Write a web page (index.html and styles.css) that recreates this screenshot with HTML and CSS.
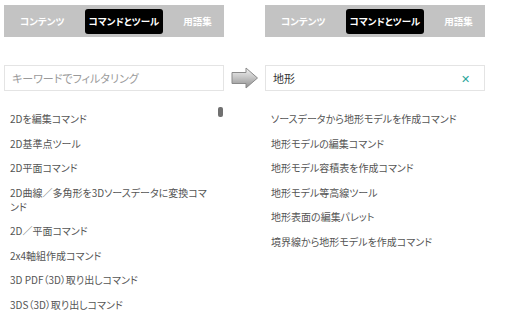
FILE: index.html
```html
<!DOCTYPE html>
<html lang="ja">
<head>
    <meta charset="UTF-8">
    <title>コマンドとツール</title>
    <link rel="stylesheet" href="styles.css">
</head>
<body>
    <div class="pantalla">
        <!-- Panel izquierdo: lista completa -->
        <div class="panel">
            <div class="pestanas">
                <span class="pestana">コンテンツ</span>
                <span class="pestana activa">コマンドとツール</span>
                <span class="pestana">用語集</span>
            </div>
            <div class="buscador">
                <span class="placeholder">キーワードでフィルタリング</span>
            </div>
            <ul class="lista">
                <li>2Dを編集コマンド</li>
                <li>2D基準点ツール</li>
                <li>2D平面コマンド</li>
                <li>2D曲線／多角形を3Dソースデータに変換コマンド</li>
                <li>2D／平面コマンド</li>
                <li>2x4軸組作成コマンド</li>
                <li>3D PDF（3D）取り出しコマンド</li>
                <li>3DS（3D）取り出しコマンド</li>
            </ul>
            <div class="scroll-thumb"></div>
        </div>

        <!-- Flecha -->
        <div class="flecha">
            <svg width="28" height="22" viewBox="0 0 28 22">
                <defs>
                    <linearGradient id="grad" x1="0" y1="0" x2="0" y2="1">
                        <stop offset="0" stop-color="#f2f2f2"/>
                        <stop offset="0.45" stop-color="#c8c8c8"/>
                        <stop offset="1" stop-color="#8e8e8e"/>
                    </linearGradient>
                </defs>
                <path d="M1 5.5 H15 V1 L26.5 11 L15 21 V16.5 H1 Z" fill="url(#grad)" stroke="#8a8a8a" stroke-width="1"/>
            </svg>
        </div>

        <!-- Panel derecho: filtrado -->
        <div class="panel">
            <div class="pestanas">
                <span class="pestana">コンテンツ</span>
                <span class="pestana activa">コマンドとツール</span>
                <span class="pestana">用語集</span>
            </div>
            <div class="buscador">
                <span class="valor">地形</span>
                <span class="borrar">✕</span>
            </div>
            <ul class="lista">
                <li>ソースデータから地形モデルを作成コマンド</li>
                <li>地形モデルの編集コマンド</li>
                <li>地形モデル容積表を作成コマンド</li>
                <li>地形モデル等高線ツール</li>
                <li>地形表面の編集パレット</li>
                <li>境界線から地形モデルを作成コマンド</li>
            </ul>
        </div>
    </div>
</body>
</html>
```

FILE: styles.css
```css
body {
    margin: 0;
    background: #fff;
    font-family: "Noto Sans CJK JP", "Noto Sans", sans-serif;
    font-feature-settings: "palt";
    color: #555;
}

.pantalla {
    display: flex;
    align-items: flex-start;
    padding: 5px 0 0 4px;
}

.panel {
    position: relative;
    width: 220px;
    flex-shrink: 0;
}

.pestanas {
    display: flex;
    align-items: center;
    gap: 16px;
    height: 32px;
    padding-left: 12px;
    background: #c3c3c3;
}

.pestana {
    display: flex;
    align-items: center;
    height: 25px;
    padding: 0 4px;
    font-size: 9.5px;
    font-weight: bold;
    color: #fff;
    white-space: nowrap;
    flex-shrink: 0;
}

.pestana.activa {
    background: #000;
    border-radius: 3px;
}

.buscador {
    display: flex;
    align-items: center;
    justify-content: space-between;
    height: 26px;
    box-sizing: border-box;
    margin-top: 28px;
    padding: 0 14px 0 7px;
    border: 1px solid #e4e4e4;
    font-size: 11px;
}

.placeholder { color: #9a9a9a; }
.valor { color: #333; }

.borrar {
    color: #2aa69b;
    font-size: 11px;
}

.lista {
    list-style: none;
    margin: 16px 0 0 0;
    padding: 0 12px 0 6px;
    font-size: 10px;
    line-height: 14px;
}

.lista li {
    padding: 5.25px 0;
}

.scroll-thumb {
    position: absolute;
    left: 214px;
    top: 102px;
    width: 5px;
    height: 10px;
    border-radius: 2px;
    background: #707070;
}

.flecha {
    width: 41px;
    flex-shrink: 0;
    display: flex;
    justify-content: center;
    padding-top: 62px;
}
```
